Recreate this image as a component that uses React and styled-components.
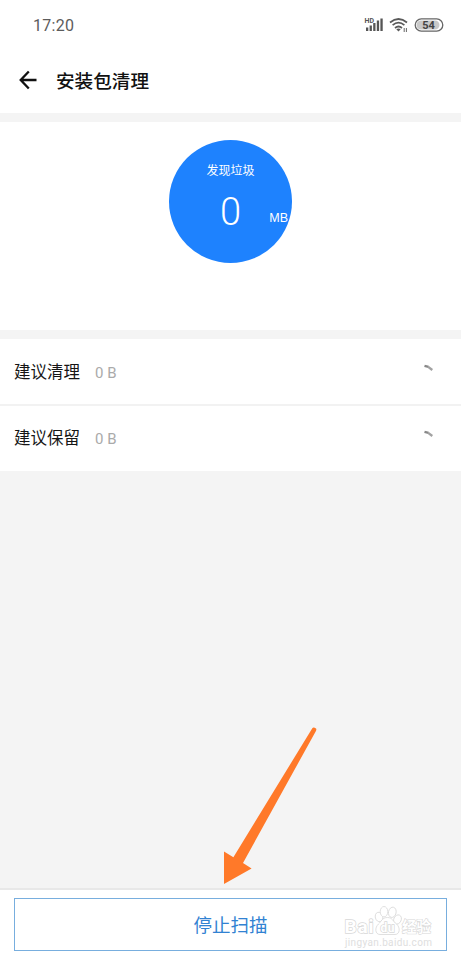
import React from 'react';
import styled, { createGlobalStyle } from 'styled-components'

const GlobalStyle = createGlobalStyle`
  * {
    box-sizing: border-box;
  }

  body {
    margin: 0;
    background: #f4f4f4;
    font-family: Roboto, 'Noto Sans CJK SC', sans-serif;
  }
`;

const Screen = styled.div`
  position: relative;
  display: flex;
  flex-direction: column;
  width: 461px;
  height: 960px;
  overflow: hidden;
  background: #f4f4f4;
`;

const StatusBar = styled.div`
  display: flex;
  justify-content: space-between;
  align-items: center;
  height: 50px;
  padding: 0 17px 0 33px;
  background: #fff;
`;

const Clock = styled.span`
  color: #5c5c5c;
  font-size: 16px;
  line-height: 20px;
  letter-spacing: 0.3px;
  padding-top: 2px;
`;

const Header = styled.div`
  display: flex;
  align-items: center;
  gap: 18px;
  height: 63px;
  padding: 0 0 3px 19px;
  background: #fff;
`;

const Title = styled.h1`
  margin: 0;
  padding-top: 3px;
  color: #111;
  font-size: 18.6px;
  font-weight: 500;
  line-height: 28px;
`;

const Summary = styled.div`
  display: flex;
  justify-content: center;
  height: 208px;
  margin: 9px 0;
  padding-top: 18px;
  background: #fff;
`;

const Circle = styled.div`
  display: flex;
  flex-direction: column;
  align-items: center;
  width: 123px;
  height: 123px;
  padding-top: 22px;
  border-radius: 50%;
  background: #1e82fe;
  color: #fff;
`;

const CircleLabel = styled.span`
  font-size: 12px;
  line-height: 18px;
`;

const Amount = styled.div`
  display: grid;
  grid-template-columns: 1fr auto 1fr;
  align-items: end;
  width: 100%;
  margin-top: 10px;
  padding-right: 4px;
  padding-left: 4px;
`;

const Number = styled.span`
  grid-column: 2;
  font-size: 38px;
  font-weight: 300;
  line-height: 44px;
`;

const Unit = styled.span`
  justify-self: end;
  padding-bottom: 8px;
  font-family: 'Liberation Sans', sans-serif;
  font-size: 12.5px;
  line-height: 16px;
`;

const Row = styled.div`
  display: flex;
  align-items: center;
  height: ${props => props.$divided ? '67px' : '65px'};
  padding: ${props => props.$divided ? '3px' : '1px'} 27px 0 14px;
  border-bottom: ${props => props.$divided ? '2px solid #f2f2f2' : 'none'};
  background: #fff;
`;

const RowName = styled.span`
  color: #151515;
  font-size: 16.5px;
  line-height: 24px;
`;

const RowSize = styled.span`
  flex: 1;
  margin-left: 15px;
  color: #aaa;
  font-size: 15px;
  line-height: 24px;
`;

const Spinner = styled.svg`
  margin-bottom: 11px;
`;

const Footer = styled.div`
  height: 72px;
  margin-top: auto;
  padding: 8px 14px 0;
  border-top: 2px solid #e8e8e8;
  background: #fff;
`;

const StopButton = styled.button`
  display: block;
  width: 100%;
  height: 53px;
  padding: 2px 0 0;
  border: 1px solid #78aede;
  background: #fff;
  color: #3182d2;
  font-family: inherit;
  font-size: 18.5px;
  line-height: 28px;
`;

const Arrow = styled.svg`
  position: absolute;
  left: 215px;
  top: 720px;
`;

const Watermark = styled.svg`
  position: absolute;
  left: 338px;
  top: 900px;
`;

function StatusIcons() {
  return (
    <svg width="80" height="24" viewBox="364 13 80 24">
      <text x="364.5" y="22.5" fontSize="7" fontWeight="700" fill="#555">HD</text>
      <g fill="#555">
        <rect x="366" y="27.5" width="2.3" height="3.5" />
        <rect x="369.6" y="25.5" width="2.3" height="5.5" />
        <rect x="373.2" y="23" width="2.3" height="8" />
        <rect x="376.8" y="20.5" width="2.3" height="10.5" />
        <rect x="380.4" y="18.5" width="2.3" height="12.5" />
      </g>
      <g fill="none" stroke="#5a5a5a" strokeWidth="1.7">
        <path d="M390 22.5Q398.5 15.5 407 22.5" />
        <path d="M392.6 25.2Q398.5 20.2 404.4 25.2" />
        <path d="M395 28Q398.5 25 402 28" />
      </g>
      <path d="M396.3 29.2Q398.5 27.6 400.7 29.2L398.5 31.5Z" fill="#5a5a5a" />
      <path d="M404.2 28v4M406.4 28v4" stroke="#666" strokeWidth="1" />
      <rect x="415.2" y="18.9" width="27.6" height="12.2" rx="6.1" fill="#fff" stroke="#666" strokeWidth="1.3" />
      <path d="M421 20.5h14a4.5 4.5 0 0 1 4.5 4.5a4.5 4.5 0 0 1-4.5 4.5h-14a4.5 4.5 0 0 1 0-9z" fill="#c9c9c9" />
      <text x="428.5" y="29" fontSize="11" fontWeight="700" fill="#444" textAnchor="middle">54</text>
    </svg>
  )
}

function FileRow(props) {
  return (
    <Row $divided={props.divided}>
      <RowName>{props.name}</RowName>
      <RowSize>{props.size}</RowSize>
      <Spinner width="10" height="8" viewBox="0 0 10 8">
        <path d="M0.5 1.8L4.6 2.9" stroke="#888" strokeWidth="2.4" />
        <path d="M4.2 2.8L8.3 6" stroke="#a2a2a2" strokeWidth="2.3" />
      </Spinner>
    </Row>
  )
}

export default class App extends React.Component {

  render() {
    return (
      <Screen>
        <GlobalStyle />
        <StatusBar>
          <Clock>17:20</Clock>
          <StatusIcons />
        </StatusBar>

        <Header>
          <svg width="19" height="20" viewBox="0 0 19 20">
            <path d="M9.8 1.5L1.7 10L9.8 18.5M1.7 10H17.5" fill="none" stroke="#111" strokeWidth="2.3" />
          </svg>
          <Title>安装包清理</Title>
        </Header>

        <Summary>
          <Circle>
            <CircleLabel>发现垃圾</CircleLabel>
            <Amount>
              <Number>0</Number>
              <Unit>MB</Unit>
            </Amount>
          </Circle>
        </Summary>

        <FileRow name="建议清理" size="0 B" divided />
        <FileRow name="建议保留" size="0 B" />

        <Footer>
          <StopButton>停止扫描</StopButton>
        </Footer>

        <Arrow width="110" height="170" viewBox="215 720 110 170">
          <path d="M312.3 728.2Q313.5 726.5 316 728.5Q316.8 729.5 315.8 731.2L243 863L251.6 868.5L224 884V851.5L233.4 857.2Z" fill="#ff7929" />
        </Arrow>

        <Watermark width="100" height="52" viewBox="338 900 100 52">
          <g fill="#fff" stroke="#d8d8d8" strokeWidth="0.8">
            <text x="344.5" y="933" fontSize="19" fontWeight="700" textLength="29" paintOrder="stroke" strokeWidth="1.4">Bai</text>
            <ellipse cx="379" cy="917" rx="3.7" ry="4.8" transform="rotate(-15 379 917)" />
            <ellipse cx="384" cy="911.7" rx="3.8" ry="5.2" />
            <ellipse cx="392.3" cy="912.3" rx="3.8" ry="5.2" transform="rotate(12 392.3 912.3)" />
            <ellipse cx="397.5" cy="919.5" rx="3.7" ry="4.8" transform="rotate(25 397.5 919.5)" />
            <path d="M387.5 917.5C382 917.5 381 922 378.5 924C374.5 927.5 375 934.5 380 934.5H395C400 934.5 400.5 927.5 396.5 924C393 921.5 392.5 917.5 387.5 917.5Z" />
            <text x="380.5" y="932" fontSize="12" fontWeight="700" textLength="14" paintOrder="stroke" strokeWidth="1.4">du</text>
            <text x="402" y="932" fontSize="15" fontWeight="700" paintOrder="stroke" strokeWidth="1.2" textLength="29" lengthAdjust="spacingAndGlyphs">经验</text>
          </g>
          <text x="345" y="945.5" fontSize="10" fill="#dedede" textLength="87">jingyan.baidu.com</text>
        </Watermark>
      </Screen>
    )
  }
}
